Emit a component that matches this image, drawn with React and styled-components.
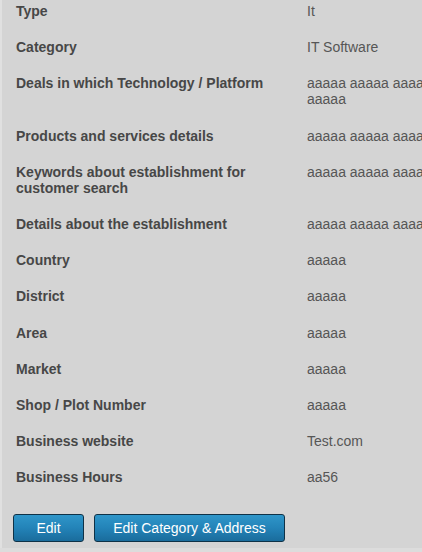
import styled, { createGlobalStyle } from "styled-components";

const GlobalStyle = createGlobalStyle`
  html, body {
    margin: 0;
    padding: 0;
    background: #dcdcdc;
    overflow: hidden;
  }
`;

const details = [
  ["Type", "It"],
  ["Category", "IT Software"],
  ["Deals in which Technology / Platform", "aaaaa aaaaa aaaaa aaaaa"],
  ["Products and services details", "aaaaa aaaaa aaaaa"],
  ["Keywords about establishment for customer search", "aaaaa aaaaa aaaaa"],
  ["Details about the establishment", "aaaaa aaaaa aaaaa"],
  ["Country", "aaaaa"],
  ["District", "aaaaa"],
  ["Area", "aaaaa"],
  ["Market", "aaaaa"],
  ["Shop / Plot Number", "aaaaa"],
  ["Business website", "Test.com"],
  ["Business Hours", "aa56"],
];

const App = () => {
  return (
    <Wrapper>
      <GlobalStyle />
      <List>
        {details.map(([label, value]) => (
          <Row key={label}>
            <Label>{label}</Label>
            <Value>{value}</Value>
          </Row>
        ))}
      </List>
      <Actions>
        <Button>Edit</Button>
        <Button $wide>Edit Category &amp; Address</Button>
      </Actions>
    </Wrapper>
  );
};

export default App;

const Wrapper = styled.div`
  width: 600px;
  height: 548px;
  box-sizing: border-box;
  background: #d4d4d4;
  border-left: 2px solid #e0e0e0;
  padding: 3px 0 0 14px;
  font-family: "Liberation Sans", Arial, sans-serif;
  font-size: 14px;
  line-height: 16px;
`;

const List = styled.div`
  display: flex;
  flex-direction: column;
  gap: 20.2px;
`;

const Row = styled.div`
  display: grid;
  grid-template-columns: 291px 128px;
`;

const Label = styled.div`
  font-weight: bold;
  color: #474747;
  padding-right: 40px;
`;

const Value = styled.div`
  color: #565656;
`;

const Actions = styled.div`
  display: flex;
  gap: 10px;
  margin-top: 29px;
  margin-left: -3px;
`;

const Button = styled.button`
  height: 28px;
  width: ${(p) => (p.$wide ? "191px" : "71px")};
  padding: 0;
  border: 1px solid #0f3247;
  border-radius: 3px;
  background: linear-gradient(to bottom, #2f96c9 0%, #2383b8 50%, #1a6c9c 100%);
  color: #ffffff;
  font-family: "Liberation Sans", Arial, sans-serif;
  font-size: 14px;
  cursor: pointer;
`;
